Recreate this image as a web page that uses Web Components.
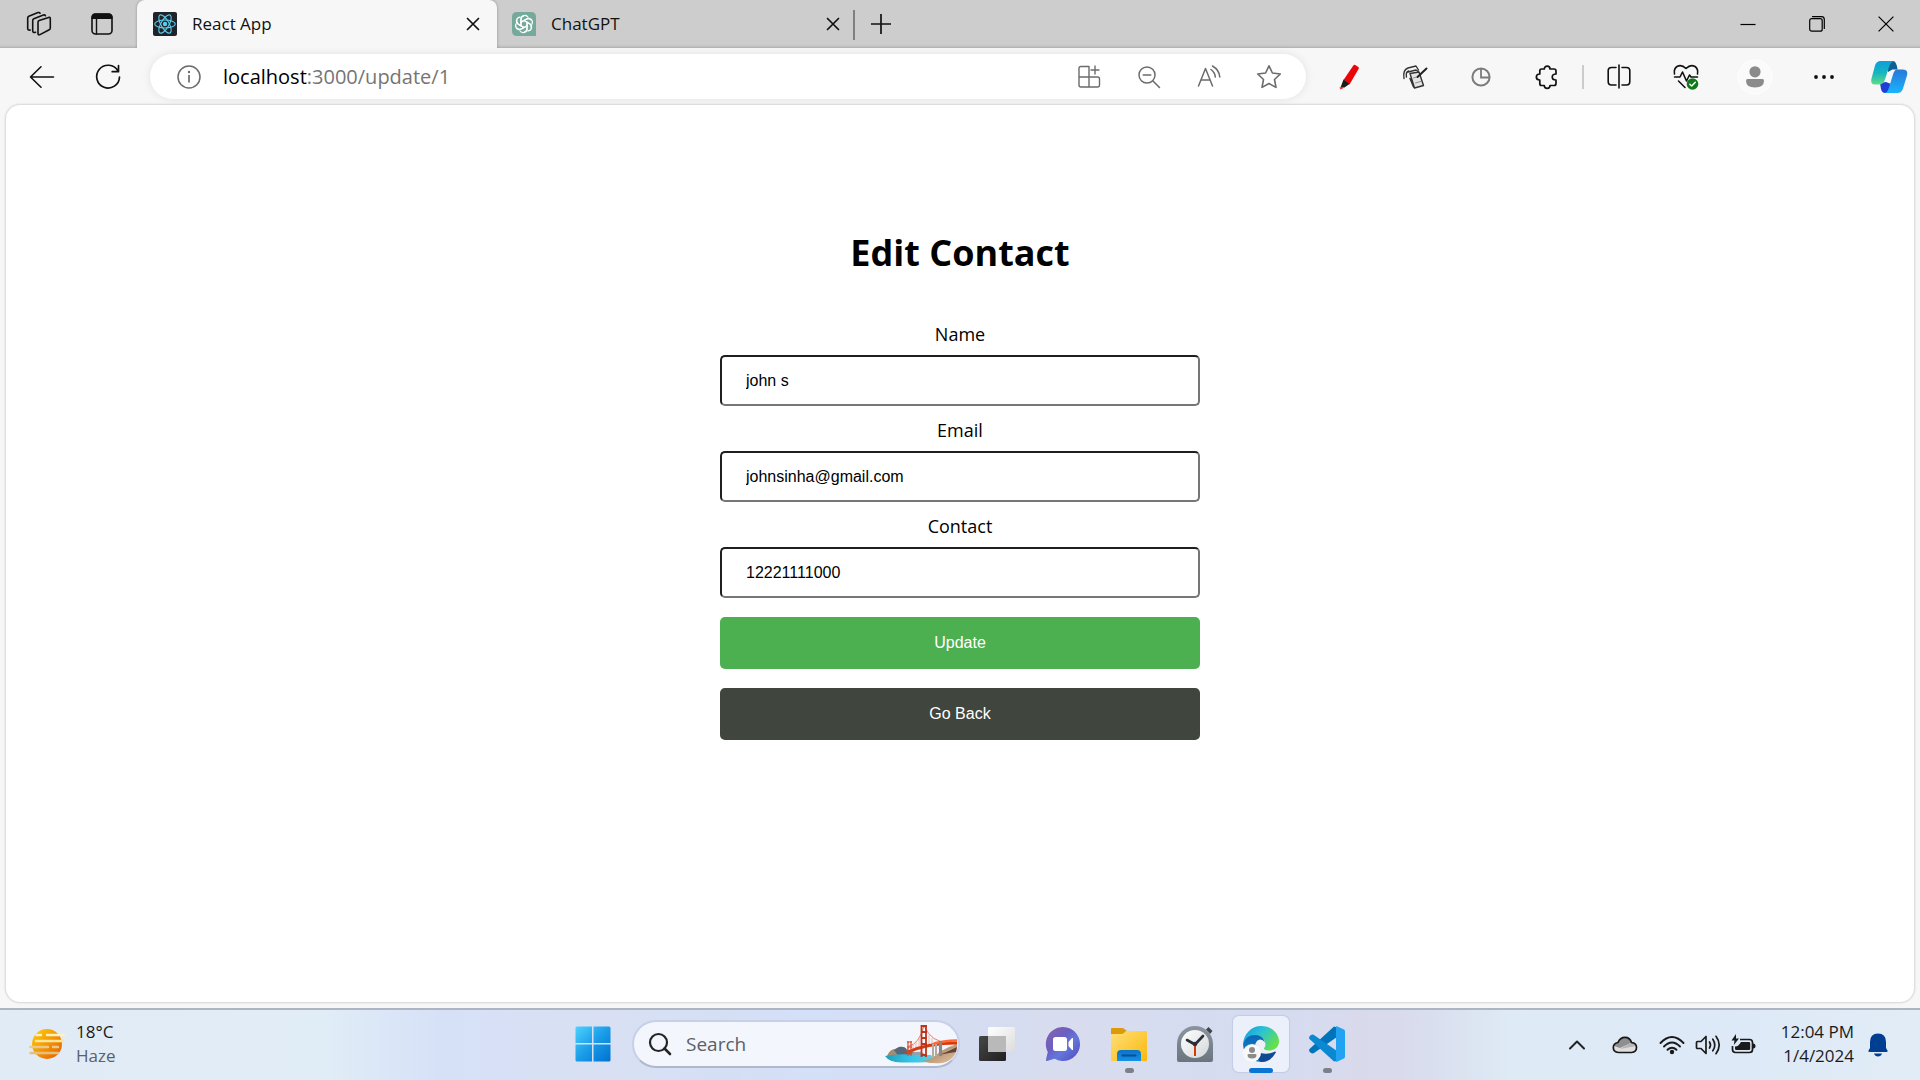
<!DOCTYPE html>
<html lang="en">
<head>
<meta charset="utf-8">
<title>React App</title>
<style>
  html, body { margin: 0; }
  body {
    min-height: 100vh;
    display: flex;
    flex-direction: column;
    font-family: "Open Sans", "Noto Sans", sans-serif;
    font-size: 17px;
    color: #111;
    background: #f7f7f7;
  }
  browser-window { flex: 1; }
</style>
</head>
<body>
<browser-window>
  <tab-strip slot="tabs">
    <icon-button slot="start" icon="workspaces" label="Workspaces" style="--w:66px"></icon-button>
    <icon-button slot="start" icon="tabmenu" label="Tab actions menu" style="--w:60px"></icon-button>
    <browser-tab active icon="react">React App</browser-tab>
    <browser-tab icon="chatgpt">ChatGPT</browser-tab>
    <icon-button icon="plus" label="New tab" style="--w:52px"></icon-button>
    <icon-button slot="end" icon="minimize" label="Minimize" style="--w:69px"></icon-button>
    <icon-button slot="end" icon="restore" label="Restore" style="--w:69px"></icon-button>
    <icon-button slot="end" icon="winclose" label="Close" style="--w:69px"></icon-button>
  </tab-strip>
  <tool-bar slot="toolbar">
    <icon-button slot="nav" icon="back" label="Back"></icon-button>
    <icon-button slot="nav" icon="refresh" label="Refresh"></icon-button>
    <address-bar host="localhost" path=":3000/update/1"></address-bar>
    <icon-button slot="ext" icon="pen" label="Highlighter"></icon-button>
    <icon-button slot="ext" icon="notebook" label="Notebook"></icon-button>
    <icon-button slot="ext" icon="timer" label="Timer"></icon-button>
    <icon-button slot="ext" icon="puzzle" label="Extensions"></icon-button>
    <icon-button slot="app" icon="split" label="Split screen"></icon-button>
    <icon-button slot="app" icon="heart" label="Browser essentials" style="--w:68px"></icon-button>
    <icon-button slot="app" icon="profile" label="Profile" style="--w:70px"></icon-button>
    <icon-button slot="app" icon="dots" label="Settings and more" style="--w:68px"></icon-button>
    <icon-button slot="app" icon="copilot" label="Copilot" style="--w:62px"></icon-button>
  </tool-bar>
  <contact-form slot="page">
    <form-field label="Name" value="john s"></form-field>
    <form-field label="Email" type="email" value="johnsinha@gmail.com"></form-field>
    <form-field label="Contact" type="tel" value="12221111000"></form-field>
    <form-button slot="actions">Update</form-button>
    <form-button slot="actions" style="--bg:#40453d">Go Back</form-button>
  </contact-form>
</browser-window>
<task-bar>
  <weather-widget slot="left" temp="18°C" sky="Haze"></weather-widget>
  <task-button icon="start" label="Start"></task-button>
  <task-search></task-search>
  <task-button icon="taskview" label="Task view"></task-button>
  <task-button icon="chat" label="Chat"></task-button>
  <task-button icon="folder" label="File Explorer" running></task-button>
  <task-button icon="clock" label="Clock"></task-button>
  <task-button icon="edge" label="Microsoft Edge" active></task-button>
  <task-button icon="vscode" label="Visual Studio Code" running></task-button>
  <icon-button slot="right" icon="chevron" label="Show hidden icons" style="--w:48px"></icon-button>
  <icon-button slot="right" icon="cloud" label="OneDrive" style="--w:48px"></icon-button>
  <quick-settings slot="right"></quick-settings>
  <tray-clock slot="right" time="12:04 PM" date="1/4/2024"></tray-clock>
  <icon-button slot="right" icon="bell" label="Notifications" style="--w:48px"></icon-button>
</task-bar>

<script>
const line = (w, color, d) => `<path d="${d}" fill="none" stroke="${color}" stroke-width="${w}" stroke-linecap="round" stroke-linejoin="round"/>`;
const K = '#111', G = '#6b6b6b';
const petals = [0, 60, 120, 180, 240, 300].map(a =>
  `<path transform="rotate(${a} 12 12)" d="M8.9 13.8V7.2a3.9 3.9 0 0 1 7.2-2M8.9 10.3l5.4-3.1a3.9 3.9 0 0 1 4.6.6" fill="none" stroke="#fff" stroke-width="1.2" stroke-linecap="round"/>`).join('');

/* name: [width, height, drawing] */
const ICONS = {
  workspaces: [26, 26, line(1.6, K, 'M12 11.3q0-1.2 1.1-1.7L22.7 6.4q1.6-.4 1.6 1.1V17q0 1.2-1.1 1.8L14 23.6q-2 .7-2-1z') +
    line(1.6, K, 'M9.5 21.3Q6.7 22 6.7 20V9.5q0-1.3 1.1-1.8L17.4 4q1.5-.5 2 .7') + line(1.6, K, 'M4.2 19Q1.7 19.5 1.7 17.6V7q0-1.3 1.1-1.8L12 1.6q1.6-.5 2 .7')],
  tabmenu: [22, 22, `<rect x="1" y="1" width="20" height="20" rx="3.5" fill="none" stroke="${K}" stroke-width="1.6"/><path d="M.5 6V4Q.5.5 4 .5h14Q21.5.5 21.5 4v2z" fill="${K}"/>` + line(1.4, K, 'M5.5 6v15')],
  react: [24, 24, `<rect width="24" height="24" rx="2" fill="#20232a"/><g fill="none" stroke="#5ccfee" stroke-width="1.1"><ellipse cx="12" cy="12" rx="10.3" ry="4"/><ellipse cx="12" cy="12" rx="10.3" ry="4" transform="rotate(60 12 12)"/><ellipse cx="12" cy="12" rx="10.3" ry="4" transform="rotate(120 12 12)"/></g><circle cx="12" cy="12" r="2.2" fill="#5ccfee"/>`],
  chatgpt: [24, 24, `<path d="M5 0h14q5 0 5 5v19H5q-5 0-5-5V5q0-5 5-5z" fill="#75a99c"/>${petals}`],
  close: [14, 14, line(1.7, K, 'M1.5 1.5l11 11M12.5 1.5l-11 11')],
  plus: [22, 22, `<path d="M11 1v20M1 11h20" stroke="${K}" stroke-width="1.7"/>`],
  minimize: [16, 16, `<path d="M.5 8.5h15" stroke="#000" stroke-width="1.2"/>`],
  restore: [16, 16, `<rect x=".7" y="2.7" width="12.5" height="12.5" rx="2" fill="none" stroke="#000" stroke-width="1.2"/>` + line(1.2, '#000', 'M3.5.7h9q2.8 0 2.8 2.8v9')],
  winclose: [16, 16, `<path d="M.6.6l14.8 14.8M15.4.6L.6 15.4" stroke="#000" stroke-width="1.2"/>`],
  back: [26, 24, line(1.6, K, 'M24.5 12H1.5M12 1.8L1.5 12 12 22.2')],
  refresh: [26, 26, line(1.7, K, 'M22.9 6.8A11.4 11.4 0 1 0 24.5 13M23.5 1.5V7.7h-6.3')],
  info: [24, 24, `<circle cx="12" cy="12" r="11" fill="none" stroke="${G}" stroke-width="1.5"/><path d="M12 10v7.5" stroke="${G}" stroke-width="1.7"/><circle cx="12" cy="7" r="1.2" fill="${G}"/>`],
  apps: [24, 24, line(1.4, G, 'M12 1.5H4Q2 1.5 2 3.5V20q0 2 2 2h16.5q2 0 2-2v-6q0-2-2-2H2M12 1.5V22M18 1v8M14 5h8')],
  zoomout: [24, 24, `<circle cx="10" cy="10" r="8" fill="none" stroke="${G}" stroke-width="1.5"/>` + line(1.5, G, 'M16 16l6.5 6.5M6.2 10h7.6')],
  readaloud: [24, 24, line(1.5, G, 'M1.5 21L8.5 3.5 15.5 21M4 15h9M14 4.5q4 3 4.3 7.5M15.5 1q6.8 4 7.3 11')],
  star: [26, 26, line(1.6, G, 'M13 1.8l3.4 7.2 7.9 1-5.8 5.5 1.5 7.9-7-3.9-7 3.9 1.5-7.9L1.7 10l7.9-1z')],
  pen: [22, 26, `<path d="M15.5 1.2q.8-.9 1.8-.3l3 2q1 .8.4 1.800L11.500 20.500l-6-4.500z" fill="#e90606"/><path d="M5.500 15.500l6 4.500L6.500 23.500H2.500z" fill="#1c1c1c"/><path d="M1.500 23.500l3-.800 1 1.300-3 1.500z" fill="#ff2020"/>`],
  notebook: [26, 24, `<path d="M8 8.500l9-1.500 4.500 13.500-9 2.500z" fill="#e4e4e4"/>` + line(1.4, '#333', 'M8 8.5l9-1.500 4.500 13.500-9 2.500zM6 7l8-2 3 2M2 13.500Q.5 5 6 3l8-2 2.500 4M4.500 12q-1-5 2-6M8 13.500l3.500 8.500') + line(2, '#222', 'M24.500 3.500l-9 8.500') + line(.7, '#666', 'M11.500 13l3-1M13.500 18l5-1.500')],
  timer: [20, 20, `<circle cx="10" cy="10" r="8.6" fill="none" stroke="#7b7b7b" stroke-width="2"/><path d="M10 1v9.500h9" fill="none" stroke="#7b7b7b" stroke-width="1.8"/>`],
  puzzle: [24, 24, line(1.7, K, 'M6.5 4H9.3C9.3.2 15 .2 15 4h4q2 0 2 2v3C16 9 16 15 21 15v3.500q0 2-2 2H15C15 24.300 9.300 24.300 9.300 20.500H6.500q-1.700 0-1.700-2V15C.2 15 .2 9 4.800 9V6q0-2 1.700-2z')],
  split: [24, 26, line(1.6, K, 'M9 3.5H4.500Q1.200 3.500 1.200 6.500v11q0 3.500 3.300 3.500H9M15 3.500h4.500q3.300 0 3.300 3v11q0 3.500-3.300 3.500H15M12 1v23')],
  heart: [26, 26, line(1.6, K, 'M1.5 10Q.5 5 4 2.500 8.500 0 13 4.500 17.500 0 22 2.500 25.500 5 24.500 10M1.500 13H7l2.500-5 4 9 3-6 1.500 2h6.500M5.500 17l6.500 6.500') + `<circle cx="19.5" cy="20" r="5.8" fill="#12781a"/>` + line(1.4, '#fff', 'M16.8 20.2l1.900 1.900 3.600-3.800')],
  profile: [36, 36, `<circle cx="18" cy="18" r="17" fill="#fafafa" stroke="#fff" stroke-width="1"/><circle cx="18" cy="12.8" r="5.6" fill="#8b8b8b"/><path d="M10.5 20h15q1.5 0 1.5 1.5Q27 28.500 18 28.500T9 21.500Q9 20 10.500 20z" fill="#8b8b8b"/>`],
  dots: [22, 6, `<g fill="${K}"><circle cx="3" cy="3" r="1.9"/><circle cx="11" cy="3" r="1.9"/><circle cx="19" cy="3" r="1.9"/></g>`],
  copilot: [36, 32, `<defs><linearGradient id="a" x1="0" y1="0" x2="0" y2="1"><stop offset="0" stop-color="#0b9fdc"/><stop offset=".5" stop-color="#16b5c0"/><stop offset="1" stop-color="#5fdc86"/></linearGradient><linearGradient id="b" x1="0" y1="0" x2="0" y2="1"><stop offset="0" stop-color="#2a78d8"/><stop offset="1" stop-color="#18b4ff"/></linearGradient></defs>
    <path d="M16 0h6q3.500 0 4.500 8.500h-5L17 11z" fill="#0d6095"/><path d="M9 22l6-1 5 2-3 9h-3q-3 0-4-4z" fill="#1d3fd6"/>
    <path d="M9.500 0H23q-3.500 1-5 6l-4 12.500q-1.500 5-6 5H4Q-1 23.500.500 17.500L4 4.500Q5.500 0 9.500 0z" fill="url(#a)"/><path d="M26 8.500h6q5.500 0 4 6l-4 13q-1.500 4.500-5.500 4.500H13.500q3-.500 4.500-5.500l4-13q1.500-5 4-5z" fill="url(#b)"/>`],
  haze: [36, 32, `<defs><linearGradient id="a" x1="0" y1="0" x2="1" y2="1"><stop offset=".1" stop-color="#fcc60a"/><stop offset="1" stop-color="#e65a00"/></linearGradient></defs><circle cx="18" cy="16" r="15" fill="url(#a)"/><g stroke-width="2.400" stroke-linecap="round"><path d="M7.500 7H12M18 7h17" stroke="#fff1bd"/><path d="M7 13h27" stroke="#fde59a"/><path d="M1.500 19H19M24 19h5" stroke="#e9c98a"/><path d="M1.500 25H29" stroke="#e3bf80"/></g>`],
  start: [36, 36, `<defs><linearGradient id="a" gradientUnits="userSpaceOnUse" x1="0" y1="0" x2="36" y2="36"><stop offset="0" stop-color="#4fd4ff"/><stop offset=".5" stop-color="#1a9ce8"/><stop offset="1" stop-color="#0070cf"/></linearGradient></defs><g fill="url(#a)"><path d="M2 .5H17v16.500H.5V2Q.5.5 2 .5zM18.500.5H34q1.500 0 1.500 1.500v15h-17zM.5 18.500H17v17H2q-1.500 0-1.500-1.500zM18.500 18.500h17V34q0 1.500-1.500 1.500H18.500z"/></g>`],
  search: [24, 24, `<circle cx="10.5" cy="10.5" r="8.5" fill="none" stroke="#242424" stroke-width="2.2"/><path d="M16.500 16.500l5.500 5.500" stroke="#242424" stroke-width="2.6" stroke-linecap="round"/>`],
  bridge: [73, 40, `<defs><linearGradient id="w" x1="0" y1="0" x2="1" y2="0"><stop offset="0" stop-color="#1f9fb8"/><stop offset=".5" stop-color="#36c3e8"/><stop offset="1" stop-color="#5fcfe0"/></linearGradient><linearGradient id="s" x1="0" y1="0" x2="1" y2="1"><stop offset="0" stop-color="#8d6c55"/><stop offset="1" stop-color="#e8c6a0"/></linearGradient></defs>
    <path d="M2 32q3-7 8-7l4-2q5-1 8 3l8 2v6H2z" fill="#a58b72"/><path d="M9 26l5-3q6-1 8 3l6 3 2 4H14z" fill="#56677a"/><path d="M26 30q6-4 12-1l6 4H26z" fill="#8ea3ae"/>
    <path d="M0 32q14-3 30-1h16l4 6q-10 2-34 1.500Q4 38 0 32z" fill="url(#w)"/>
    <path d="M37 37q9-1 14-6 6-5 13-8l8-3q1 7-4 13-4 5-11 6-12 1-20-2z" fill="url(#s)"/><path d="M54 31q8-3 18-8l-1 5q-8 1-17 3z" fill="#60453a"/>
    <path d="M24 22q10-2 15-20 8 17 24 16M24 22q-2 6-4 8" fill="none" stroke="#ee6040" stroke-width=".8"/><path d="M28 21v7M31 18v9M34 14v12M44 11v12M47 14v8M51 17v4" stroke="#ee9275" stroke-width=".6"/>
    <path d="M20 29q22-10 52-10" fill="none" stroke="#d83a10" stroke-width="3"/><path d="M48 20q10-3.500 24-3.500" stroke="#ff6a34" stroke-width="2.5" fill="none"/>
    <path d="M36.500 33V1M41 33V1M36 2h6M36 8h6M36 14h6M36 20h6M36 31h6" stroke="#bd341b" stroke-width="1.8"/><path d="M23 32V17M26 32V17M22 18h5M22 23h5M22 29h5" stroke="#d84a2b" stroke-width="1.2"/><path d="M48 20v13M51 20v12" stroke="#b3aaa0" stroke-width="2"/><path d="M55.500 17v15" stroke="#8b8680" stroke-width="3.2"/>`],
  taskview: [36, 36, `<defs><linearGradient id="a" x1="0" y1="0" x2="1" y2="1"><stop offset="0" stop-color="#474747"/><stop offset="1" stop-color="#202020"/></linearGradient><linearGradient id="b" x1="0" y1="0" x2="1" y2="1"><stop offset="0" stop-color="#fff"/><stop offset="1" stop-color="#dcdcdc"/></linearGradient></defs><rect x="0" y="10" width="27" height="25" rx="1.5" fill="url(#a)"/><rect x="9" y="1" width="27" height="25" rx="1.5" fill="url(#b)"/><path d="M9 10h18v16H10.500Q9 26 9 24.500z" fill="#b9b9b9"/>`],
  chat: [36, 36, `<defs><linearGradient id="a" x1="0" y1="0" x2="1" y2="1"><stop offset="0" stop-color="#8a62a8"/><stop offset=".4" stop-color="#6a5fc4"/><stop offset=".6" stop-color="#6278dc"/><stop offset="1" stop-color="#5546bd"/></linearGradient></defs><path d="M18 1a17 17 0 1 1-8.500 31.700L2 35q-1.500.2-1-1.500l1.800-7.500A17 17 0 0 1 18 1z" fill="url(#a)"/><rect x="8" y="11" width="14" height="14" rx="2.5" fill="#fff"/><path d="M23.500 16l3.500-4h1v12h-1l-3.500-4z" fill="#fff"/>`],
  folder: [36, 36, `<defs><linearGradient id="a" x1="0" y1="0" x2="1" y2="1"><stop offset="0" stop-color="#ffe07a"/><stop offset="1" stop-color="#fbb80a"/></linearGradient><linearGradient id="b" x1="0" y1="0" x2="0" y2="1"><stop offset="0" stop-color="#0a73c9"/><stop offset="1" stop-color="#1592e6"/></linearGradient></defs><path d="M1 2h10q2 0 3 1.500L16 5l-4 5H0V3q0-1 1-1z" fill="#dc9a0a"/><path d="M0 8h10q2 0 3.500-1.500L15 5h20q1 0 1 1v28q0 1-1 1H1q-1 0-1-1z" fill="url(#a)"/><path d="M6 35v-7q0-4 4-4h16q4 0 4 4v7z" fill="url(#b)"/><path d="M11.500 29.500h13" stroke="#064d91" stroke-width="2" stroke-linecap="round"/>`],
  clock: [36, 36, `<defs><linearGradient id="a" x1="0" y1="0" x2="0" y2="1"><stop offset="0" stop-color="#8b959d"/><stop offset="1" stop-color="#6a757e"/></linearGradient><linearGradient id="f" x1="0" y1="0" x2="1" y2="1"><stop offset="0" stop-color="#fff"/><stop offset="1" stop-color="#d4d7da"/></linearGradient></defs><path d="M29 3.500l2.500-2.500 4 4L33 8z" fill="#3f464c"/><path d="M18 0a18 18 0 0 1 18 18v16q0 2-2 2H2q-2 0-2-2V18A18 18 0 0 1 18 0z" fill="url(#a)"/><circle cx="18" cy="18" r="14" fill="url(#f)"/><path d="M10 14l8 4.500L26 10" fill="none" stroke="#2a2f35" stroke-width="2.6" stroke-linecap="round" stroke-linejoin="round"/><path d="M18 20v10" stroke="#d83b01" stroke-width="2"/><circle cx="18" cy="18" r="2.2" fill="#2a2f35"/>`],
  edge: [36, 36, `<defs><linearGradient id="a" x1="0" y1="0" x2="1" y2=".6"><stop offset="0" stop-color="#1597e0"/><stop offset=".5" stop-color="#2cc3d2"/><stop offset="1" stop-color="#66e04a"/></linearGradient><linearGradient id="b" x1="0" y1="0" x2="0" y2="1"><stop offset="0" stop-color="#0b66b4"/><stop offset="1" stop-color="#1489dc"/></linearGradient></defs>
    <path d="M0 18C1 7 9 0 18 0c10 0 18 7 18 15.500 0 5.500-4.500 9-10 9-4 0-6-1.500-4.500-3 2-2.500 1-9-5-10.500Q6 9 0 18z" fill="url(#a)"/><path d="M0 18q3-9 12-9 8 0 10 7.500-2-3-5-3-5 1-5 7.500 0 10 12 14-3 1-6 1Q1 35 0 18z" fill="url(#b)"/><path d="M13 19q1 10 12 8.500 4-.5 7-2 1.500 0 .5 1.500-5 9-14.500 9Q10 32 13 19z" fill="#114b94"/><circle cx="9" cy="27" r="9" fill="#f8f8f8"/><circle cx="9" cy="24" r="3" fill="#8b8b8b"/><path d="M5.500 28h7q1 0 1 1 0 3.500-4.500 3.500T4.500 29q0-1 1-1z" fill="#8b8b8b"/>`],
  vscode: [36, 36, `<path d="M25 .5l3 1V11L5 27q-2 1-3.500-.5L.5 25.500Q-.5 24 .5 23z" fill="#0074ba"/><path d="M1.500 9.500Q3 8 5 9L28 25v10l-3 .5L.5 13Q-.5 12 .5 10.500z" fill="#0a88d2"/><path d="M27 .5q.5-.5 1.500 0L35 3.500q1 .5 1 2v25q0 1.500-1 2l-6.500 3q-1 .5-1.500 0z" fill="#22a3f2"/>`],
  chevron: [18, 12, line(2, '#222', 'M2 9.500l7-7 7 7')],
  cloud: [26, 20, `<path d="M6.500 17.500Q1.300 17 1.300 12.500q0-4 4.700-5Q8 2.300 13 2.300T19.500 7.500q5 .5 5 5t-5 5z" fill="#dedede"/><path d="M2 11q1-3 4.500-3.500Q8.500 2.500 13 2.500T19.300 7.800L8 13z" fill="#8f8f8f"/><path d="M19 7.500q4 0 5 3.500L8 14z" fill="#b5b5b5"/>` + line(1.7, '#161616', 'M6.5 17.500Q1.300 17 1.300 12.500q0-4 4.700-5Q8 2.300 13 2.300T19.500 7.500q5 .5 5 5t-5 5z')],
  wifi: [26, 20, line(1.9, '#1a1a1a', 'M1.5 8Q13-4 24.500 8M5 11.500Q13 3.500 21 11.500M8.500 14.800Q13 10.500 17.500 14.800') + `<circle cx="13" cy="17" r="2.2" fill="#1a1a1a"/>`],
  volume: [26, 22, line(1.7, '#1a1a1a', 'M2.5 7.500H6L11 2.500V19.500L6 14.500H2.500Q1.500 14.500 1.500 13.500V8.500Q1.500 7.500 2.500 7.500zM14.500 8q2 3 0 6M17.800 5.200q4 5.800 0 11.600M21 2.300q6.400 8.700 0 17.400')],
  battery: [26, 22, `<path d="M9 5.500h9.500q3 0 3 3v7q0 3-3 3H4.500q-3 0-3-3V12" fill="none" stroke="#1a1a1a" stroke-width="1.7"/><path d="M10 8h8q1.200 0 1.200 1.200v5.600q0 1.200-1.200 1.200H5.200Q4 16 4 14.800V12.500q3 .5 6-4.500z" fill="#1a1a1a"/><path d="M22 9.500q2.500 0 2.500 2.500T22 14.500z" fill="#1a1a1a"/><path d="M5 0L.5 6.500H3.500L2.800 11 8 4.500H5z" fill="#1a1a1a"/>`],
  bell: [22, 24, `<path d="M11 .5q8 0 8 8.500v6l1.500 2.500q.5 1.500-1 1.500h-17q-1.500 0-1-1.500L3 15V9Q3 .5 11 .5z" fill="#003e92"/><path d="M7 20.500h8q-1 3-4 3t-4-3z" fill="#003e92"/>`]
};

/* Base class: clones a template made from html() and css() into an open shadow root. */
class Base extends HTMLElement {
  connectedCallback() {
    if (this.shadowRoot) return;
    const t = document.createElement('template');
    t.innerHTML = `<style>:host,*{box-sizing:border-box}button{font:inherit;color:inherit;border:0;margin:0;background:none}${this.css()}</style>${this.html()}`;
    this.attachShadow({ mode: 'open' }).append(t.content.cloneNode(true));
  }
  css() { return ':host{display:block}'; }
  html() { return '<slot></slot>'; }
  at(n) { return this.getAttribute(n) || ''; }
}

customElements.define('ui-icon', class extends Base {
  css() { return ':host{display:block;flex:none}svg{display:block;overflow:visible}'; }
  html() {
    const [w, h, d] = ICONS[this.at('name')];
    return `<svg width="${w}" height="${h}" viewBox="0 0 ${w} ${h}" aria-hidden="true">${d}</svg>`;
  }
});

customElements.define('icon-button', class extends Base {
  css() { return ':host{display:flex;flex:none;width:var(--w,66px)}button{flex:1;padding:0;display:grid;place-items:center}'; }
  html() { return `<button type="button" aria-label="${this.at('label')}"><ui-icon name="${this.at('icon')}"></ui-icon></button>`; }
});

customElements.define('browser-window', class extends Base {
  css() { return `:host{display:flex;flex-direction:column;background:#f7f7f7}
    main{flex:1;margin:0 6px 6px;background:#fff;border-radius:14px;box-shadow:0 0 3px rgba(0,0,0,.28)}`; }
  html() { return '<slot name="tabs"></slot><slot name="toolbar"></slot><main><slot name="page"></slot></main>'; }
});

customElements.define('tab-strip', class extends Base {
  css() { return `:host{display:flex;height:48px;background:linear-gradient(#cdcdcd 44px,#c6c6c6 46px,#b0b0b0)}
    .start{display:flex;padding:0 5px 0 6px}.tabs{flex:1;display:flex}.end{display:flex}`; }
  html() { return '<div class="start"><slot name="start"></slot></div><div class="tabs"><slot></slot></div><div class="end"><slot name="end"></slot></div>'; }
});

customElements.define('browser-tab', class extends Base {
  css() { return `:host{display:flex;align-items:center;position:relative;width:358px;padding:0 10px 0 15px;gap:15px}
    :host::after{content:"";width:2px;height:30px;background:#808080;position:absolute;right:0;top:10px}
    :host([active]){width:360px;padding:0 12px 0 16px;gap:15px;background:#f7f7f7;border-radius:8px 8px 0 0;box-shadow:0 0 3px rgba(0,0,0,.3);clip-path:inset(0 -6px)}
    :host([active])::after{display:none}
    span{flex:1;line-height:24px}
    button{width:24px;height:24px;padding:0;display:grid;place-items:center}`; }
  html() { return `<ui-icon name="${this.at('icon')}"></ui-icon><span><slot></slot></span><button type="button" aria-label="Close tab"><ui-icon name="close"></ui-icon></button>`; }
});

customElements.define('tool-bar', class extends Base {
  css() { return `:host{display:flex;align-items:stretch;padding:6px 0 6px 9px}
    .g{display:flex}.nav{margin-right:9px}.ext{margin-left:10px}
    hr{width:2px;height:24px;margin:auto 2px;border:0;background:#ccc}`; }
  html() { return '<div class="g nav"><slot name="nav"></slot></div><slot></slot><div class="g ext"><slot name="ext"></slot></div><hr><div class="g"><slot name="app"></slot></div>'; }
});

customElements.define('address-bar', class extends Base {
  css() { return `:host{display:flex;align-items:center;flex:1;height:45px;padding:0 7px 0 27px;border-radius:23px;background:#fff;box-shadow:0 0 8px rgba(0,0,0,.09)}
    .url{flex:1;margin-left:22px;font-size:20px;line-height:28px;color:#757575;outline:0}b{font-weight:400;color:#000}
    icon-button{--w:60px;align-self:stretch}button{padding:0}`; }
  html() { return `<button type="button" aria-label="Site information"><ui-icon name="info"></ui-icon></button>
    <div class="url" role="textbox" aria-label="Address"><b>${this.at('host')}</b>${this.at('path')}</div>
    <icon-button icon="apps" label="App available"></icon-button><icon-button icon="zoomout" label="Zoom"></icon-button>
    <icon-button icon="readaloud" label="Read aloud"></icon-button><icon-button icon="star" label="Favorite"></icon-button>`; }
});

customElements.define('contact-form', class extends Base {
  css() { return `:host{display:flex;flex-direction:column;align-items:center;padding:124px 24px 48px;color:#000}
    h1{margin:0 0 44px;font-size:36px;line-height:48px;font-weight:700}
    form{width:100%;max-width:480px;display:flex;flex-direction:column;gap:19px}
    .fields{display:flex;flex-direction:column;gap:11px}`; }
  html() { return '<h1>Edit Contact</h1><form><div class="fields"><slot></slot></div><slot name="actions"></slot></form>'; }
});

customElements.define('form-field', class extends Base {
  css() { return `:host{display:flex;flex-direction:column;gap:8px}
    label{font-size:18px;line-height:26px;text-align:center}
    input{width:100%;height:51px;padding:0 24px;border:2px solid;border-color:#1f1f1f #767676 #767676 #1f1f1f;border-radius:5px;background:#fff;color:#000;font:16px "Liberation Sans",Arial,sans-serif}`; }
  html() { return `<label for="f">${this.at('label')}</label><input id="f" type="${this.at('type') || 'text'}" value="${this.at('value')}">`; }
});

customElements.define('form-button', class extends Base {
  css() { return `:host{display:flex}button{flex:1;height:52px;border-radius:5px;background:var(--bg,#4caf50);color:#fff;font:16px "Liberation Sans",Arial,sans-serif}`; }
  html() { return '<button type="button"><slot></slot></button>'; }
});

customElements.define('task-bar', class extends Base {
  css() { return `:host{display:grid;grid-template-columns:1fr auto 1fr;height:72px;border-top:2px solid #adb5c3;
      background:linear-gradient(90deg,#e0ebf6,#e0ecf6 17%,#d6e1f8 23%,#d9e0f3 30%,#d5dff4 38%,#d4e0f9 42%,#d5ddf2 50%,#d8dcee 56%,#d5dcf1 66%,#d9daeb 72%,#d9dded 74%,#deebf6 79%,#dde9f7 90%,#e1ecf6)}
    div{display:flex}.right{justify-content:flex-end;padding-right:18px}`; }
  html() { return '<div><slot name="left"></slot></div><div><slot></slot></div><div class="right"><slot name="right"></slot></div>'; }
});

customElements.define('weather-widget', class extends Base {
  css() { return `:host{display:flex}button{display:flex;align-items:center;gap:11px;padding:0 29px 2px;text-align:left;line-height:24px;color:#1b1b1b}small{display:block;font-size:17px;color:#5a6168}`; }
  html() { return `<button type="button"><ui-icon name="haze"></ui-icon><span>${this.at('temp')}<small>${this.at('sky')}</small></span></button>`; }
});

customElements.define('task-button', class extends Base {
  css() { return `:host{display:grid;width:66px;place-items:center}
    button{position:relative;width:56px;height:56px;padding:0;display:grid;place-items:center;border-radius:6px;margin-bottom:2px}
    :host([active]) button{background:#ebf0fa;box-shadow:0 0 1px 1px rgba(150,165,200,.3)}
    :host([running]) button::after,:host([active]) button::after{content:"";position:absolute;bottom:-1px;width:9px;height:5px;border-radius:3px;background:#7c8088}
    :host([active]) button::after{width:24px;background:#0a76d4}`; }
  html() { return `<button type="button" aria-label="${this.at('label')}"><ui-icon name="${this.at('icon')}"></ui-icon></button>`; }
});

customElements.define('task-search', class extends Base {
  css() { return `:host{display:flex;align-items:center;width:328px;height:48px;margin:10px 4px 0 6px;border:2px solid #c6d0e6;border-bottom-color:#b0b9cc;border-radius:24px;background:#f3f6fd;padding-left:14px}
    label{display:contents}
    input{flex:1;min-width:0;margin-left:14px;padding:0;border:0;outline:0;background:none;font:19px/26px "Open Sans","Noto Sans",sans-serif;color:#222}
    input::placeholder{color:#5c5f66;opacity:1}
    .art{overflow:hidden;border-radius:0 22px 22px 0;height:44px;display:flex;align-items:center}`; }
  html() { return '<label for="q"><ui-icon name="search"></ui-icon></label><input id="q" type="text" placeholder="Search" aria-label="Search"><div class="art"><ui-icon name="bridge"></ui-icon></div>'; }
});

customElements.define('quick-settings', class extends Base {
  css() { return `:host{display:flex}button{display:flex;align-items:center;gap:10px;padding:0 10px}`; }
  html() { return '<button type="button" aria-label="Network, volume and battery"><ui-icon name="wifi"></ui-icon><ui-icon name="volume"></ui-icon><ui-icon name="battery"></ui-icon></button>'; }
});

customElements.define('tray-clock', class extends Base {
  css() { return `:host{display:flex}button{min-width:87px;padding:0 0 2px;text-align:right;line-height:24px;color:#1b1b1b}`; }
  html() { return `<button type="button">${this.at('time')}<br>${this.at('date')}</button>`; }
});
</script>
</body>
</html>
